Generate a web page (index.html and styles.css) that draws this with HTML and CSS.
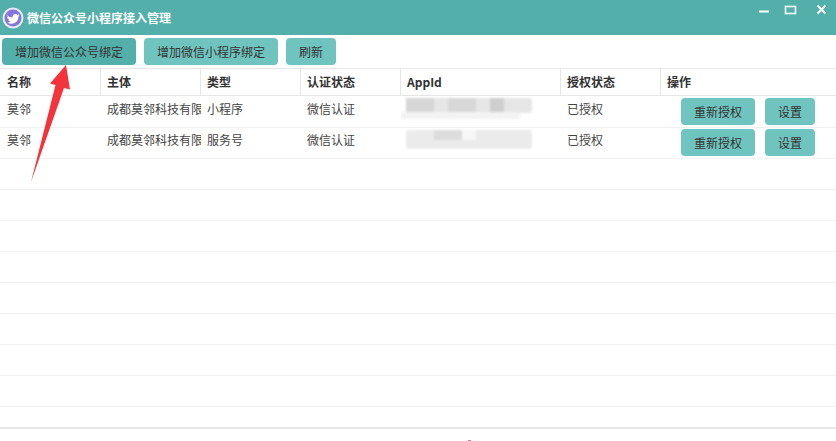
FILE: index.html
```html
<!DOCTYPE html>
<html lang="zh">
<head>
<meta charset="utf-8">
<title>微信公众号小程序接入管理</title>
<link rel="stylesheet" href="styles.css">
</head>
<body>
<div class="window">
  <header class="titlebar">
    <svg class="logo" width="22" height="22" viewBox="0 0 22 22">
      <circle cx="11" cy="11" r="10.500" fill="#ece8fb"/>
      <circle cx="11" cy="11" r="8.500" fill="#8577da"/>
      <path d="M4.500 7.500c1.600 1.900 3.600 3 6 3.100-.3-2 1.100-3.600 2.900-3.600.9 0 1.600.4 2.100.9l1.800-.6-1 1.500 1.300-.2-1.200 1.200c0 3.800-2.900 7-7 7-1.500 0-2.800-.4-4-1.200 1.300.1 2.500-.3 3.400-1-1.300-.1-2.100-.8-2.500-1.800h1.100c-1.300-.5-2.200-1.500-2.200-2.800l1.100.3c-1.100-.8-1.600-2.400-1.800-2.200z" fill="#fff"/>
    </svg>
    <span class="app-title">微信公众号小程序接入管理</span>
    <div class="win-controls">
      <svg class="win-icon" width="77" height="20" viewBox="0 0 77 20">
        <path d="M0 11.500h10" stroke="#fff" stroke-width="2" fill="none"/>
        <rect x="26.500" y="6.500" width="10" height="7" stroke="#fff" stroke-width="1.600" fill="none"/>
        <path d="M58.500 5.500l8 8M66.500 5.500l-8 8" stroke="#fff" stroke-width="2" fill="none"/>
      </svg>
    </div>
  </header>

  <div class="toolbar">
    <button class="btn btn-wide btn-active">增加微信公众号绑定</button>
    <button class="btn btn-wide">增加微信小程序绑定</button>
    <button class="btn btn-small">刷新</button>
  </div>

  <div class="table">
    <div class="row head">
      <div class="cell">名称</div>
      <div class="cell">主体</div>
      <div class="cell">类型</div>
      <div class="cell">认证状态</div>
      <div class="cell">AppId</div>
      <div class="cell">授权状态</div>
      <div class="cell">操作</div>
    </div>
    <div class="row row-first">
      <div class="cell">莫邻</div>
      <div class="cell clip">成都莫邻科技有限公司</div>
      <div class="cell">小程序</div>
      <div class="cell">微信认证</div>
      <div class="cell"><div class="mask"><i class="m1"></i><i class="m2"></i><i class="m3"></i></div></div>
      <div class="cell">已授权</div>
      <div class="cell actions">
        <button class="btn btn-act">重新授权</button>
        <button class="btn btn-small">设置</button>
      </div>
    </div>
    <div class="row row-second">
      <div class="cell">莫邻</div>
      <div class="cell clip">成都莫邻科技有限公司</div>
      <div class="cell">服务号</div>
      <div class="cell">微信认证</div>
      <div class="cell"><div class="mask mask-b"><i class="m4"></i><i class="m5"></i></div></div>
      <div class="cell">已授权</div>
      <div class="cell actions">
        <button class="btn btn-act">重新授权</button>
        <button class="btn btn-small">设置</button>
      </div>
    </div>
    <div class="row blank"></div>
    <div class="row blank"></div>
    <div class="row blank"></div>
    <div class="row blank"></div>
    <div class="row blank"></div>
    <div class="row blank"></div>
    <div class="row blank"></div>
    <div class="row blank"></div>
    <div class="row blank last"></div>
  </div>

  <svg class="arrow" width="80" height="130" viewBox="0 0 80 130">
    <path d="M66 1L50 19.500 55.500 21 31 118 64 24 70 25.500z" fill="#f5333a"/>
  </svg>
  <div class="speck"></div>
</div>
</body>
</html>
```
FILE: styles.css
```css
* { box-sizing: border-box; }
html, body { margin: 0; padding: 0; background: #fff; }
body {
  font-family: "Noto Sans CJK SC", "Noto Sans", sans-serif;
  font-size: 12px;
  color: #444;
}
.window { position: relative; width: 836px; height: 441px; overflow: hidden; }

.titlebar {
  height: 35px;
  background: #52afa9;
  display: flex;
  align-items: center;
  padding-left: 2px;
  gap: 3px;
  padding-top: 1px;
}
.logo { flex: none; }
.app-title { color: #fff; font-weight: 700; line-height: 16px; }
.win-controls { margin-left: auto; align-self: flex-start; margin-top: -1px; }
.win-icon { display: block; }

.toolbar {
  display: flex;
  gap: 8px;
  padding: 3px 0 0 2px;
  height: 33px;
}
.btn {
  height: 27px;
  border: 0;
  border-radius: 4px;
  background: #6fc4bf;
  color: #333;
  font: inherit;
  line-height: 27px;
  padding: 0;
  text-align: center;
}
.btn-wide { width: 134px; }
.btn-small { width: 50px; }
.btn-act { width: 74px; }
.btn-active { background: #52afa9; }

.table { border-top: 1px solid #e6e6e6; }
.row {
  display: grid;
  grid-template-columns: 101px 100px 100px 100px 160px 100px 175px;
  height: 31px;
  border-bottom: 1px solid #f1f1f1;
}
.head { height: 27px; border-bottom: 1px solid #e6e6e6; font-weight: 700; color: #333; }
.head .cell { border-right: 1px solid #e6e6e6; line-height: 25px; padding-top: 0; }
.head .cell:last-child { border-right: 0; }
.row-first { height: 32px; }
.cell {
  padding: 4px 2px 0 6px;
  line-height: 18px;
  white-space: nowrap;
  overflow: hidden;
  min-width: 0;
  position: relative;
}
.row .cell:first-child { padding-left: 7px; }
.row-second .cell { padding-top: 3px; }
.actions {
  display: flex;
  gap: 10px;
  padding: 2px 0 0 20px;
  overflow: visible;
}
.row-second .actions { padding-top: 1px; }
.blank.last { height: 22px; border-bottom: 2px solid #e8e8e8; }

.mask {
  position: absolute;
  left: 5px;
  top: 2px;
  width: 126px;
  height: 15px;
  background: #e6e6e6;
  border-radius: 3px;
  filter: blur(1px);
}
.mask::after {
  content: "";
  position: absolute;
  left: -6px;
  top: 14px;
  width: 120px;
  height: 7px;
  background: #f3f3f3;
  border-radius: 4px;
}
.mask-b { top: 2px; height: 19px; background: #ebebeb; }
.mask-b::after { display: none; }
.mask i { position: absolute; top: 0; height: 100%; display: block; }
.m1 { left: 0; width: 28px; background: #d6d6d6; }
.m2 { left: 42px; width: 28px; background: #d8d8d8; }
.m3 { left: 84px; width: 14px; background: #cfcfcf; }
.mask-b .m4 { left: 28px; width: 28px; height: 10px; background: #dcdcdc; }
.mask-b .m5 { left: 56px; width: 14px; height: 10px; background: #f7f7f7; }

.arrow { position: absolute; left: 0; top: 64px; }
.speck {
  position: absolute;
  left: 468px;
  top: 440px;
  width: 3px;
  height: 1px;
  background: #f07a8c;
}
```
